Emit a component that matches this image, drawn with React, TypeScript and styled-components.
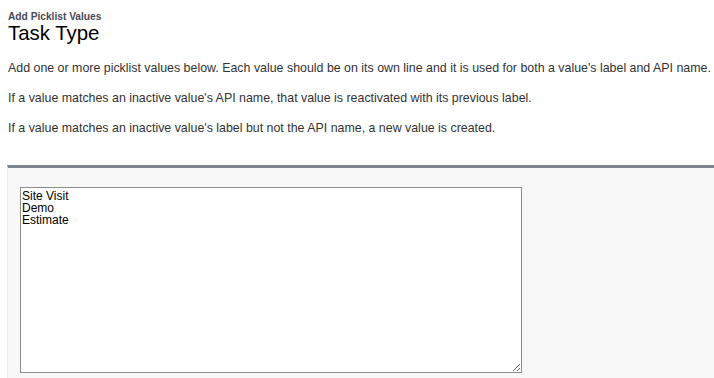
import React from "react";
import styled, { createGlobalStyle } from "styled-components";

const GlobalStyle = createGlobalStyle`
  body {
    margin: 0;
    background-color: #ffffff;
    font-family: "Liberation Sans", Arial, sans-serif;
  }
`;

const Page = styled.div`
  display: flex;
  flex-direction: column;
  padding: 11px 0 0 7px;
  overflow: hidden;
  height: 378px;
  box-sizing: border-box;
`;

const Header = styled.div`
  padding-left: 1px;
  margin-bottom: 17px;
`;

const Eyebrow = styled.div`
  font-size: 10.2px;
  line-height: 12px;
  font-weight: bold;
  color: #4a4a56;
`;

const Title = styled.h1`
  margin: 0;
  font-size: 20.4px;
  line-height: 21px;
  font-weight: normal;
  color: #000000;
`;

const Help = styled.p`
  margin: 0 0 15px;
  padding-left: 1px;
  font-size: 12.4px;
  line-height: 15px;
  color: #333333;
  white-space: nowrap;
`;

const Panel = styled.div`
  margin-top: 14px;
  flex: 1;
  background-color: #f8f8f8;
  border-top: 3px solid #7e848f;
  border-left: 1px solid #ececec;
  padding: 19px 0 0 12px;
`;

const ValuesInput = styled.textarea`
  display: block;
  width: 502px;
  height: 186px;
  box-sizing: border-box;
  border: 1px solid #8c8c8c;
  padding: 2px 1px;
  margin: 0;
  font-family: "Liberation Sans", Arial, sans-serif;
  font-size: 12px;
  line-height: 12px;
  color: #000000;
  background: #ffffff;
  outline: none;
`;

const App = () => {
  return (
    <>
      <GlobalStyle />
      <Page>
        <Header>
          <Eyebrow>Add Picklist Values</Eyebrow>
          <Title>Task Type</Title>
        </Header>
        <Help>
          Add one or more picklist values below. Each value should be on its own line and it is
          used for both a value's label and API name.
        </Help>
        <Help>
          If a value matches an inactive value's API name, that value is reactivated with its
          previous label.
        </Help>
        <Help>
          If a value matches an inactive value's label but not the API name, a new value is
          created.
        </Help>
        <Panel>
          <ValuesInput defaultValue={"Site Visit\nDemo\nEstimate"} />
        </Panel>
      </Page>
    </>
  );
};

export default App;
